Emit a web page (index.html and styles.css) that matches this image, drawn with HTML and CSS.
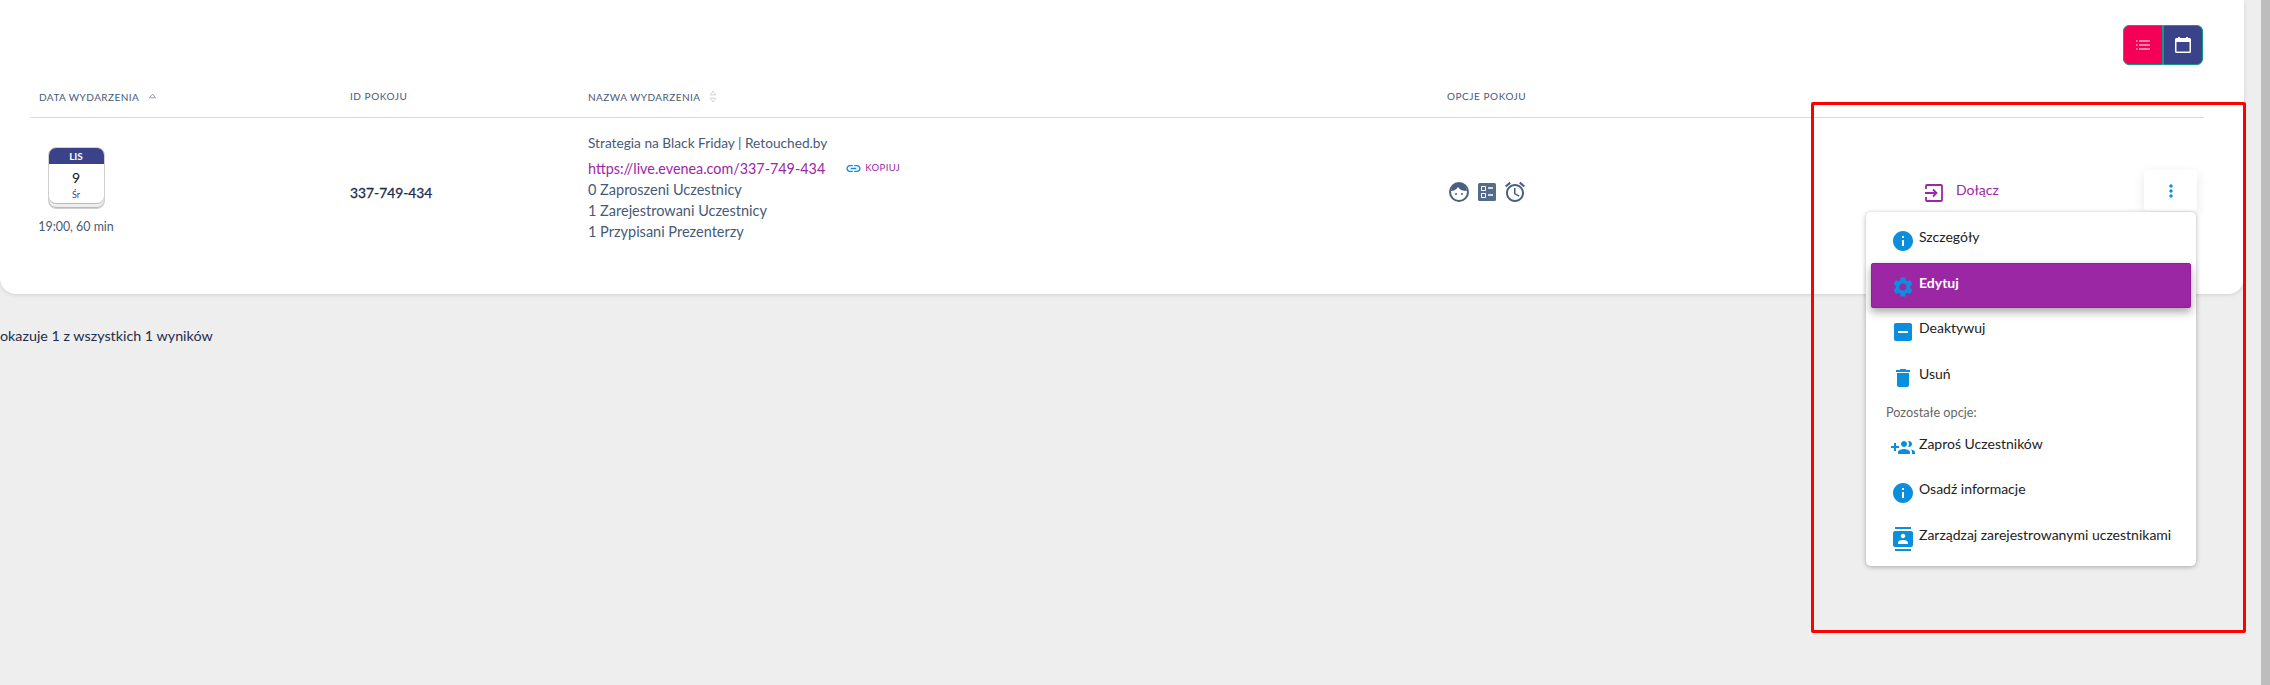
FILE: index.html
```html
<!DOCTYPE html>
<html lang="pl">
<head>
<meta charset="utf-8">
<title>Wydarzenia</title>
<link rel="stylesheet" href="styles.css">
</head>
<body>
<div class="page">
  <main class="main">
    <section class="card">
      <div class="toolbar">
        <div class="toggle">
          <button class="toggle-btn list" type="button">
            <svg class="toggle-ico" viewBox="0 0 14 10"><path d="M0 1h1.5M3 1h11M0 5h1.5M3 5h11M0 9h1.5M3 9h11" stroke="#fff" stroke-width="1" fill="none"/></svg>
          </button>
          <button class="toggle-btn cal" type="button">
            <svg class="toggle-cal" viewBox="0 0 16 16"><path d="M3 0h2v1h6V0h2v1h1.5c.8 0 1.5.7 1.5 1.5v12c0 .8-.7 1.5-1.5 1.5h-13C.7 16 0 15.300 0 14.500v-12C0 1.700.7 1 1.500 1H3zM1.500 5v9.500h13V5z" fill="#fff"/></svg>
          </button>
        </div>
      </div>
      <div class="table-head">
        <div class="th first">DATA WYDARZENIA <svg class="sort" viewBox="0 0 10 6"><path d="M5 1l3.500 4h-7z" fill="none" stroke="#8d99ab" stroke-width="1"/></svg></div>
        <div class="th up">ID POKOJU</div>
        <div class="th">NAZWA WYDARZENIA <svg class="sort both" viewBox="0 0 10 16"><path d="M5 1l3.500 5h-7zM5 15l3.500-5h-7z" fill="none" stroke="#c5cad2" stroke-width="1"/></svg></div>
        <div class="th up">OPCJE POKOJU</div>
        <div class="th"></div>
      </div>
      <div class="table-row">
        <div class="cell date">
          <div class="calendar">
            <div class="cal-month">LIS</div>
            <div class="cal-day">9</div>
            <div class="cal-week">Śr</div>
          </div>
          <div class="time">19:00, 60 min</div>
        </div>
        <div class="cell room-id">337-749-434</div>
        <div class="cell details">
          <div class="line title">Strategia na Black Friday | Retouched.by</div>
          <div class="line link-line">
            <a class="url">https://live.evenea.com/337-749-434</a>
            <svg class="link-ico" viewBox="0 0 24 24"><path d="M3.900 12c0-1.710 1.390-3.100 3.100-3.100h4V7H7c-2.760 0-5 2.240-5 5s2.240 5 5 5h4v-1.900H7c-1.710 0-3.100-1.390-3.100-3.100zM8 13h8v-2H8v2zm9-6h-4v1.900h4c1.710 0 3.100 1.390 3.100 3.100s-1.390 3.100-3.100 3.100h-4V17h4c2.760 0 5-2.240 5-5s-2.240-5-5-5z"/></svg>
            <span class="copy">KOPIUJ</span>
          </div>
          <div class="line">0 Zaproszeni Uczestnicy</div>
          <div class="line">1 Zarejestrowani Uczestnicy</div>
          <div class="line">1 Przypisani Prezenterzy</div>
        </div>
        <div class="cell options">
          <svg class="opt face" viewBox="0 0 20 20"><circle cx="10" cy="10" r="9" fill="#fff" stroke="#4a5f80" stroke-width="2"/><path d="M2 9C3 4 6 1 10 1s7 3 8 8c-4 0-7-1-9-4-1 2-4 4-7 4z" fill="#4a5f80"/><circle cx="7" cy="12" r="1" fill="#4a5f80"/><circle cx="13" cy="12" r="1" fill="#4a5f80"/></svg>
          <svg class="opt board" viewBox="0 0 18 18"><rect width="18" height="18" rx="1.500" fill="#566b8a"/><path d="M3.500 3.500h4v4h-4zM3.500 10.500h4v4h-4z" fill="none" stroke="#fff"/><path d="M10 5h5M10 12h5" stroke="#fff" stroke-width="1.500"/></svg>
          <svg class="opt alarm" viewBox="0 0 24 24"><path fill="#4a5f80" d="M22 5.720l-4.600-3.860-1.290 1.530 4.600 3.860L22 5.720zM7.880 3.390L6.600 1.860 2 5.710l1.290 1.530 4.590-3.850zM12.500 8H11v6l4.750 2.850.75-1.230-4-2.370V8zM12 4c-4.970 0-9 4.030-9 9s4.020 9 9 9c4.970 0 9-4.030 9-9s-4.030-9-9-9zm0 16c-3.870 0-7-3.130-7-7s3.130-7 7-7 7 3.130 7 7-3.130 7-7 7z"/></svg>
        </div>
        <div class="cell actions">
          <div class="join">
            <svg class="join-ico" viewBox="0 0 18 18"><path d="M1 5V2c0-.6.4-1 1-1h14c.6 0 1 .4 1 1v14c0 .6-.4 1-1 1H2c-.6 0-1-.4-1-1v-3M0 9h11M8 5.500L11.500 9 8 12.500" fill="none" stroke="#9c27a4" stroke-width="1.800"/></svg>
            <span>Dołącz</span>
          </div>
          <button class="kebab" type="button">
            <svg class="kebab-ico" viewBox="0 0 24 24"><path d="M12 8c1.100 0 2-.9 2-2s-.9-2-2-2-2 .9-2 2 .9 2 2 2zm0 2c-1.100 0-2 .9-2 2s.9 2 2 2 2-.9 2-2-.9-2-2-2zm0 6c-1.100 0-2 .9-2 2s.9 2 2 2 2-.9 2-2-.9-2-2-2z"/></svg>
          </button>
        </div>
      </div>
    </section>
    <p class="results">okazuje 1 z wszystkich 1 wyników</p>
  </main>
  <div class="scrollbar"></div>

  <nav class="menu">
    <div class="item">
      <svg class="ico" viewBox="0 0 24 24"><path d="M12 2C6.480 2 2 6.480 2 12s4.480 10 10 10 10-4.480 10-10S17.520 2 12 2zm1 15h-2v-6h2v6zm0-8h-2V7h2v2z"/></svg>
      <span>Szczegóły</span>
    </div>
    <div class="item active">
      <svg class="ico" viewBox="0 0 24 24"><path d="M19.140 12.940c.04-.3.06-.61.06-.94 0-.32-.02-.64-.07-.94l2.030-1.580c.18-.14.23-.41.12-.61l-1.920-3.320c-.12-.22-.37-.29-.59-.22l-2.390.96c-.5-.38-1.030-.7-1.620-.94l-.36-2.540c-.04-.24-.24-.41-.48-.41h-3.840c-.24 0-.43.17-.47.41l-.36 2.540c-.59.24-1.130.57-1.620.94l-2.390-.96c-.22-.08-.47 0-.59.22L2.740 8.870c-.12.21-.08.47.12.61l2.030 1.580c-.05.3-.09.63-.09.94s.02.64.07.94l-2.030 1.580c-.18.14-.23.41-.12.61l1.920 3.320c.12.22.37.29.59.22l2.390-.96c.5.38 1.030.7 1.620.94l.36 2.540c.05.24.24.41.48.41h3.840c.24 0 .44-.17.47-.41l.36-2.540c.59-.24 1.130-.56 1.620-.94l2.390.96c.22.08.47 0 .59-.22l1.920-3.320c.12-.22.07-.47-.12-.61l-2.010-1.580zM12 15.600c-1.980 0-3.600-1.620-3.600-3.600s1.620-3.600 3.600-3.600 3.600 1.620 3.600 3.600-1.620 3.600-3.600 3.600z"/></svg>
      <span>Edytuj</span>
    </div>
    <div class="item">
      <svg class="ico" viewBox="0 0 24 24"><path d="M19 3H5c-1.100 0-2 .9-2 2v14c0 1.100.9 2 2 2h14c1.100 0 2-.9 2-2V5c0-1.100-.9-2-2-2zm-2 10H7v-2h10v2z"/></svg>
      <span>Deaktywuj</span>
    </div>
    <div class="item">
      <svg class="ico" viewBox="0 0 24 24"><path d="M6 19c0 1.100.9 2 2 2h8c1.100 0 2-.9 2-2V7H6v12zM19 4h-3.500l-1-1h-5l-1 1H5v2h14V4z"/></svg>
      <span>Usuń</span>
    </div>
    <div class="menu-label">Pozostałe opcje:</div>
    <div class="item">
      <svg class="ico" viewBox="0 0 24 24"><path d="M8 10H5V7H3v3H0v2h3v3h2v-3h3v-2zm10 1c1.660 0 2.990-1.340 2.990-3S19.660 5 18 5c-.32 0-.63.05-.91.14.57.81.9 1.790.9 2.860s-.34 2.040-.9 2.860c.28.09.59.14.91.14zm-5 0c1.660 0 2.990-1.340 2.990-3S14.660 5 13 5s-3 1.340-3 3 1.340 3 3 3zm6.620 2.160c.83.73 1.380 1.660 1.380 2.840v2h3v-2c0-1.540-2.370-2.490-4.380-2.840zM13 13c-2 0-6 1-6 3v2h12v-2c0-2-4-3-6-3z"/></svg>
      <span>Zaproś Uczestników</span>
    </div>
    <div class="item">
      <svg class="ico" viewBox="0 0 24 24"><path d="M12 2C6.480 2 2 6.480 2 12s4.480 10 10 10 10-4.480 10-10S17.520 2 12 2zm1 15h-2v-6h2v6zm0-8h-2V7h2v2z"/></svg>
      <span>Osadź informacje</span>
    </div>
    <div class="item">
      <svg class="ico" viewBox="0 0 24 24"><path d="M20 0H4v2h16V0zM4 24h16v-2H4v2zM20 4H4c-1.100 0-2 .9-2 2v12c0 1.100.9 2 2 2h16c1.100 0 2-.9 2-2V6c0-1.100-.9-2-2-2zm-8 2.750c1.240 0 2.250 1.010 2.250 2.250s-1.010 2.250-2.250 2.250S9.750 10.240 9.750 9 10.760 6.750 12 6.750zM17 17H7v-1.500c0-1.670 3.330-2.500 5-2.500s5 .83 5 2.500V17z"/></svg>
      <span>Zarządzaj zarejestrowanymi uczestnikami</span>
    </div>
  </nav>
  <div class="annotation"></div>
</div>
</body>
</html>
```

FILE: styles.css
```css
* { box-sizing: border-box; }
html, body { margin: 0; height: 100%; }
body {
  font-family: "Lato", "Noto Sans", sans-serif;
  background: #eeeeee;
  color: #465a78;
  overflow: hidden;
}
.page {
  position: relative;
  display: flex;
  width: 2270px;
  height: 685px;
  overflow: hidden;
}
.main { flex: 1; min-width: 0; }
.scrollbar { width: 9px; background: #bdbdbd; }

.card {
  width: 2244px;
  height: 294px;
  padding: 25px 40px 0 30px;
  background: #fff;
  border-radius: 0 0 16px 16px;
  box-shadow: 0 1px 4px rgba(0, 0, 0, .12);
}
.toolbar { display: flex; justify-content: flex-end; padding-right: 1px; height: 40px; }
.toggle { display: flex; width: 80px; height: 40px; }
.toggle-btn {
  display: flex;
  align-items: center;
  justify-content: center;
  flex: 1;
  padding: 0;
  border: 1px solid #119a8c;
}
.toggle-btn.list { background: #f50057; border-radius: 6px 0 0 6px; }
.toggle-btn.cal { background: #3a4389; border-radius: 0 6px 6px 0; }
.toggle-ico { width: 14px; height: 10px; }
.toggle-cal { width: 16px; height: 16px; }

.table-head, .table-row {
  display: grid;
  grid-template-columns: 320px 238px 859px 460px 1fr;
}
.table-head {
  height: 53px;
  align-items: start;
  border-bottom: 1px solid #dcdcdc;
  font-size: 10px;
  letter-spacing: .45px;
  color: #465a78;
}
.th { display: flex; align-items: center; height: 12px; margin-top: 26px; white-space: nowrap; }
.th.first { padding-left: 9px; }
.th.up { margin-top: 25px; letter-spacing: .55px; }
.sort { width: 9px; height: 6px; margin-left: 9px; margin-top: -3px; }
.sort.both { width: 8px; height: 13px; margin-left: 9px; margin-top: -1px; }

.table-row { height: 175px; }
.cell { display: flex; }
.date { flex-direction: column; padding-top: 29px; width: 92px; align-items: center; }
.calendar {
  flex: none;
  width: 57px;
  height: 62px;
  border: 1px solid #d0d0d0;
  border-radius: 8px;
  overflow: hidden;
  background: #fff;
  box-shadow: inset 0 -1px 0 #bbb, inset 0 -4px 0 #eee, inset 0 -5px 0 #bbb;
  text-align: center;
}
.cal-month { height: 16px; background: #3a4389; color: #fff; font-size: 10px; font-weight: 700; line-height: 16px; }
.cal-day { font-size: 14px; color: #111; line-height: 16px; margin-top: 6px; }
.cal-week { font-size: 9px; color: #3a4389; line-height: 12px; margin-top: 3px; }
.time { margin-top: 10px; font-size: 12.400px; line-height: 16px; white-space: nowrap; }
.room-id {
  align-items: center;
  padding-bottom: 27px;
  font-size: 13.800px;
  color: #1d2d4b;
  -webkit-text-stroke: .3px #1d2d4b;
}
.details { flex-direction: column; padding-top: 12px; font-size: 14.500px; }
.line { line-height: 21px; white-space: nowrap; }
.title { height: 26px; line-height: 26px; font-size: 13.700px; margin-bottom: 1px; }
.link-line { display: flex; align-items: center; height: 22px; font-size: 14.350px; }
.url { color: #9c27a4; }
.link-ico { width: 17px; height: 17px; margin-left: 20px; fill: #0b8fdc; }
.copy { margin-left: 3px; font-size: 9.500px; color: #9c27a4; letter-spacing: .4px; padding-bottom: 2px; }
.options { align-items: center; padding: 0 0 27px 2px; }
.opt { flex: none; }
.face { width: 20px; height: 20px; }
.board { width: 18px; height: 18px; margin-left: 9px; }
.alarm { width: 24px; height: 24px; margin-left: 7px; }
.actions { position: relative; }
.join {
  position: absolute;
  left: 18px;
  top: 66px;
  display: flex;
  align-items: flex-start;
  gap: 13px;
  font-size: 14px;
  color: #9c27a4;
}
.join-ico { width: 18px; height: 18px; }
.join span { line-height: 16px; margin-top: -2px; }
.kebab {
  position: absolute;
  left: 237px;
  top: 52px;
  display: flex;
  align-items: center;
  justify-content: center;
  width: 53px;
  height: 41px;
  padding: 0;
  border: 0;
  border-radius: 3px;
  background: #fff;
  box-shadow: 0 3px 12px rgba(0, 0, 0, .1);
}
.kebab-ico { width: 20px; height: 20px; fill: #0b8fdc; }

.results { margin: 33px 0 0; font-size: 14.300px; line-height: 18px; color: #1d2d4b; }

.menu {
  position: absolute;
  left: 1866px;
  top: 212px;
  width: 330px;
  height: 354px;
  padding: 5px;
  background: #fff;
  border-radius: 5px;
  box-shadow: 0 1px 5px rgba(0, 0, 0, .3);
  font-size: 14px;
  color: #222;
}
.item {
  display: flex;
  align-items: flex-start;
  height: 45.700px;
  padding-left: 20px;
  border-radius: 2px;
  white-space: nowrap;
}
.item span { margin: 10px 0 0 4px; line-height: 20px; }
.ico { width: 24px; height: 24px; margin-top: 12px; fill: #0b8fdc; flex: none; }
.item.active {
  background: #9c27a4;
  border: 1px solid #8f1f98;
  color: #fff;
  font-weight: 700;
  padding-left: 19px;
  box-shadow: 0 4px 8px rgba(0, 0, 0, .35);
}
.item.active .ico { margin-top: 11px; }
.item.active span { margin-top: 9px; }
.menu-label { height: 24px; padding-left: 15px; font-size: 12.700px; line-height: 24px; color: #666; }

.annotation {
  position: absolute;
  left: 1811px;
  top: 102px;
  width: 435px;
  height: 531px;
  border: 3px solid #f00;
  border-radius: 2px;
  pointer-events: none;
}
```
